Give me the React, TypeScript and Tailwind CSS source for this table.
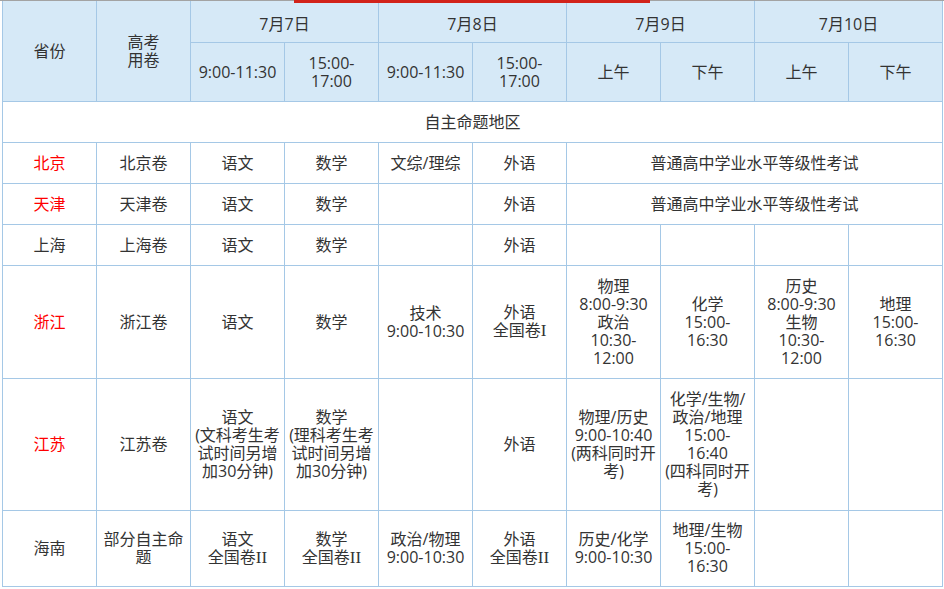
import type { ReactNode } from 'react'

type CellProps = {
  children?: ReactNode
  colSpan?: number
  rowSpan?: number
  red?: boolean
  head?: boolean
  top?: boolean
}

// "|" splits lines, "#I" / "#II" become serif roman numerals
function Lines({ text }: { text: string }) {
  const parts = text.split('|')
  return (
    <>
      {parts.map((p, i) => {
        const [main, roman] = p.split('#')
        return (
          <span key={i} className="block">
            {main}
            {roman && <span className="font-['Liberation_Serif',serif] text-[17px]">{roman}</span>}
          </span>
        )
      })}
    </>
  )
}

function Cell({ children, colSpan, rowSpan, red, head, top }: CellProps) {
  return (
    <td
      colSpan={colSpan}
      rowSpan={rowSpan}
      className={
        'border border-[#a5c8e6] px-0.5 text-center align-middle whitespace-nowrap ' +
        (head ? 'border-t-0 bg-[#d6e9f7] ' : 'bg-white ') +
        (top ? 'pt-[5px] ' : '') +
        (red ? 'text-[#ff0000]' : 'text-[#333333]')
      }
    >
      {typeof children === 'string' ? <Lines text={children} /> : children}
    </td>
  )
}

const LEVEL_EXAM = '普通高中学业水平等级性考试'

export default function App() {
  return (
    <div className="relative w-[944px] h-[589px] overflow-hidden bg-white font-['Open_Sans','Noto_Sans_CJK_SC',sans-serif] text-[16px] leading-[18px]">
      <div className="h-px w-full bg-[#a3a3a3]" />
      <div className="absolute left-[294px] top-0 h-[3px] w-[356px] bg-[#d2231a]" />

      <table className="ml-[2px] w-[940px] table-fixed border-collapse">
        <colgroup>
          {Array.from({ length: 10 }).map((_, i) => (
            <col key={i} className="w-[94px]" />
          ))}
        </colgroup>
        <tbody>
          <tr className="h-[41px]">
            <Cell head rowSpan={2}>省份</Cell>
            <Cell head rowSpan={2}>高考|用卷</Cell>
            <Cell head top colSpan={2}>7月7日</Cell>
            <Cell head top colSpan={2}>7月8日</Cell>
            <Cell head top colSpan={2}>7月9日</Cell>
            <Cell head top colSpan={2}>7月10日</Cell>
          </tr>
          <tr className="h-[59px]">
            <Cell head>9:00-11:30</Cell>
            <Cell head>15:00-|17:00</Cell>
            <Cell head>9:00-11:30</Cell>
            <Cell head>15:00-|17:00</Cell>
            <Cell head>上午</Cell>
            <Cell head>下午</Cell>
            <Cell head>上午</Cell>
            <Cell head>下午</Cell>
          </tr>
          <tr className="h-[41px]">
            <Cell colSpan={10}>自主命题地区</Cell>
          </tr>
          <tr className="h-[41px]">
            <Cell red>北京</Cell>
            <Cell>北京卷</Cell>
            <Cell>语文</Cell>
            <Cell>数学</Cell>
            <Cell>文综/理综</Cell>
            <Cell>外语</Cell>
            <Cell colSpan={4}>{LEVEL_EXAM}</Cell>
          </tr>
          <tr className="h-[41px]">
            <Cell red>天津</Cell>
            <Cell>天津卷</Cell>
            <Cell>语文</Cell>
            <Cell>数学</Cell>
            <Cell />
            <Cell>外语</Cell>
            <Cell colSpan={4}>{LEVEL_EXAM}</Cell>
          </tr>
          <tr className="h-[41px]">
            <Cell>上海</Cell>
            <Cell>上海卷</Cell>
            <Cell>语文</Cell>
            <Cell>数学</Cell>
            <Cell />
            <Cell>外语</Cell>
            <Cell />
            <Cell />
            <Cell />
            <Cell />
          </tr>
          <tr className="h-[113px]">
            <Cell red>浙江</Cell>
            <Cell>浙江卷</Cell>
            <Cell>语文</Cell>
            <Cell>数学</Cell>
            <Cell>技术|9:00-10:30</Cell>
            <Cell>外语|全国卷#I</Cell>
            <Cell>物理|8:00-9:30|政治|10:30-|12:00</Cell>
            <Cell>化学|15:00-|16:30</Cell>
            <Cell>历史|8:00-9:30|生物|10:30-|12:00</Cell>
            <Cell>地理|15:00-|16:30</Cell>
          </tr>
          <tr className="h-[132px]">
            <Cell red>江苏</Cell>
            <Cell>江苏卷</Cell>
            <Cell>语文|(文科考生考|试时间另增|加30分钟)</Cell>
            <Cell>数学|(理科考生考|试时间另增|加30分钟)</Cell>
            <Cell />
            <Cell>外语</Cell>
            <Cell>物理/历史|9:00-10:40|(两科同时开|考)</Cell>
            <Cell>化学/生物/|政治/地理|15:00-|16:40|(四科同时开|考)</Cell>
            <Cell />
            <Cell />
          </tr>
          <tr className="h-[76px]">
            <Cell>海南</Cell>
            <Cell>部分自主命|题</Cell>
            <Cell>语文|全国卷#II</Cell>
            <Cell>数学|全国卷#II</Cell>
            <Cell>政治/物理|9:00-10:30</Cell>
            <Cell>外语|全国卷#II</Cell>
            <Cell>历史/化学|9:00-10:30</Cell>
            <Cell>地理/生物|15:00-|16:30</Cell>
            <Cell />
            <Cell />
          </tr>
        </tbody>
      </table>
    </div>
  )
}
